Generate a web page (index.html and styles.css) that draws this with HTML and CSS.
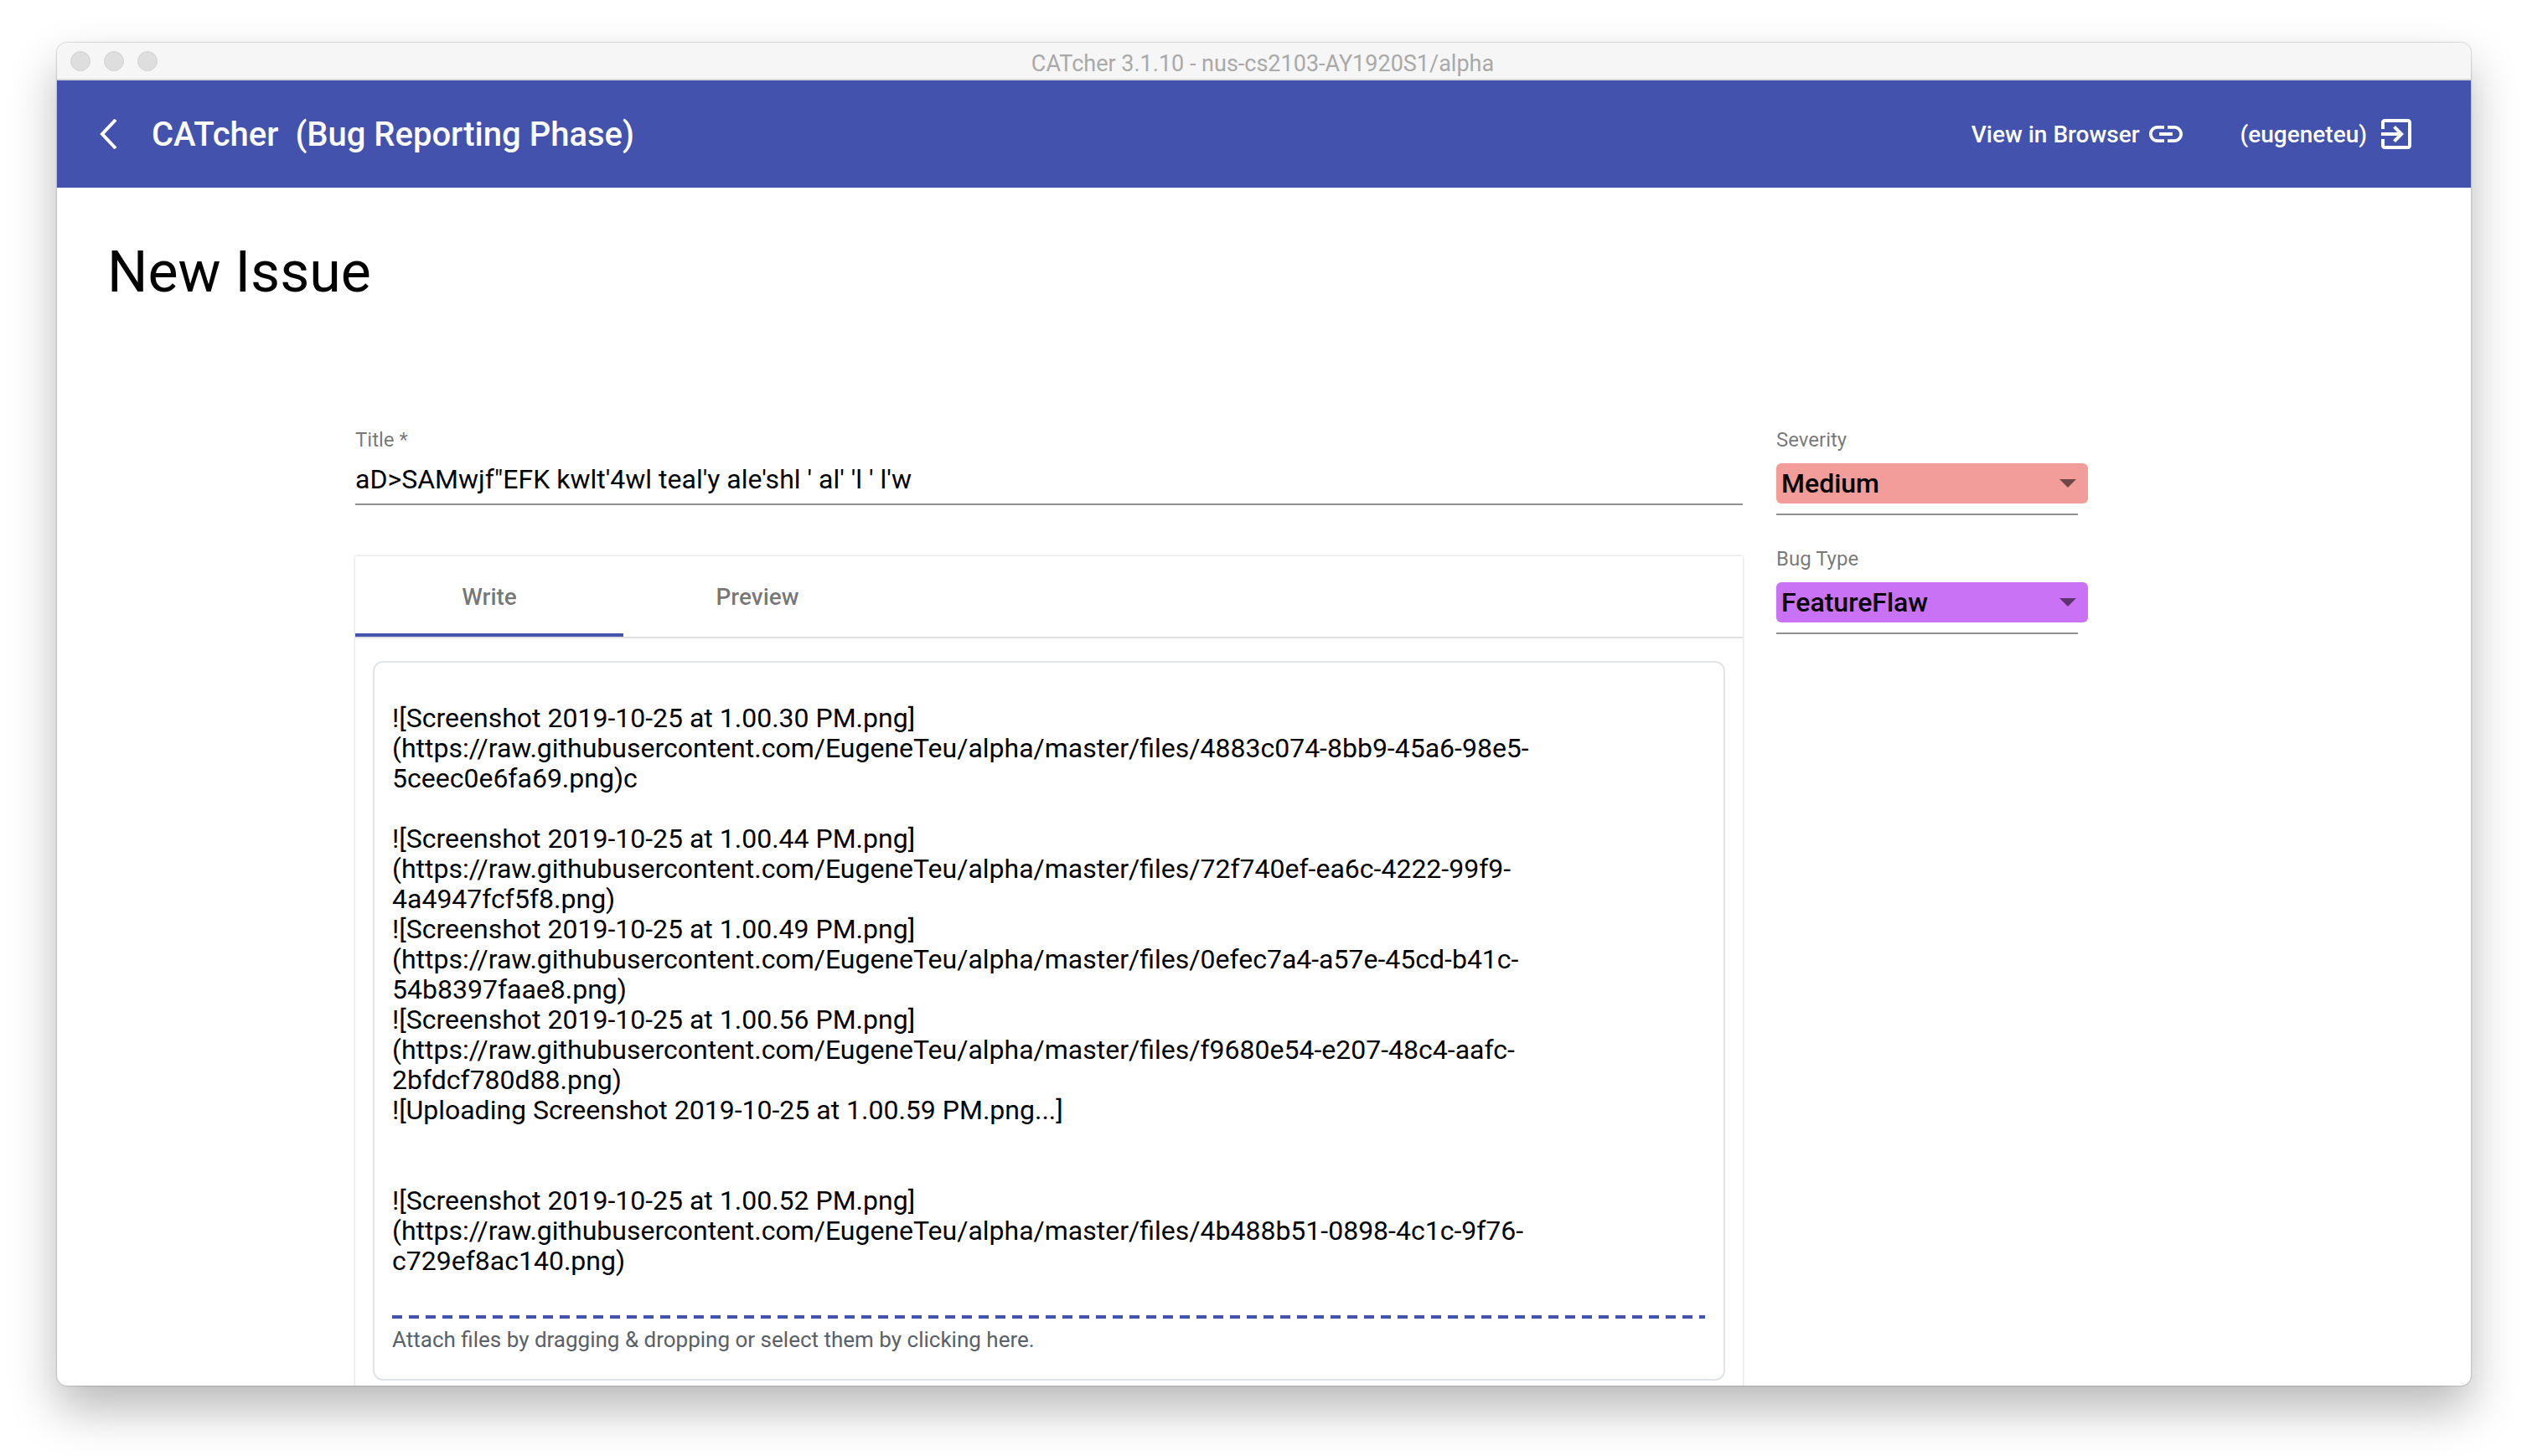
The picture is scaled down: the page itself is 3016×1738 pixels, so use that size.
FILE: index.html
```html
<!DOCTYPE html>
<html lang="en">
<head>
<meta charset="utf-8">
<title>CATcher</title>
<link rel="stylesheet" href="styles.css">
</head>
<body>
<div class="window">
  <div class="titlebar">
    <div class="lights"><span class="light"></span><span class="light"></span><span class="light"></span></div>
    <div class="wintitle">CATcher 3.1.10 - nus-cs2103-AY1920S1/alpha</div>
  </div>
  <header class="toolbar">
    <svg class="back" viewBox="0 0 21 36" width="21" height="36"><path d="M19 1 3 18l16 17" fill="none" stroke="#fff" stroke-width="4"/></svg>
    <div class="apptitle"><span>CATcher</span><span>(Bug Reporting Phase)</span></div>
    <div class="spacer"></div>
    <div class="tool browser">
      <span>View in Browser</span>
      <svg viewBox="0 0 24 24" width="48" height="48"><path fill="#fff" d="M3.9 12c0-1.71 1.39-3.1 3.1-3.1h4V7H7c-2.76 0-5 2.24-5 5s2.24 5 5 5h4v-1.9H7c-1.71 0-3.1-1.39-3.1-3.1zM8 13h8v-2H8v2zm9-6h-4v1.9h4c1.71 0 3.1 1.39 3.1 3.1s-1.39 3.1-3.1 3.1h-4V17h4c2.76 0 5-2.24 5-5s-2.24-5-5-5z"/></svg>
    </div>
    <div class="tool user">
      <span>(eugeneteu)</span>
      <svg viewBox="0 0 24 24" width="48" height="48"><path fill="#fff" d="M10.09 15.59L11.5 17l5-5-5-5-1.41 1.41L12.67 11H3v2h9.67l-2.58 2.59zM19 3H5c-1.11 0-2 .9-2 2v4h2V5h14v14H5v-4H3v4c0 1.1.89 2 2 2h14c1.1 0 2-.9 2-2V5c0-1.1-.9-2-2-2z"/></svg>
    </div>
  </header>
  <main class="content">
    <h1 class="heading">New Issue</h1>
    <div class="form">
      <div class="left">
        <div class="field">
          <label class="label">Title *</label>
          <div class="titlevalue">aD&gt;SAMwjf"EFK kwlt'4wl teal'y ale'shl ' al' 'l ' l'w</div>
        </div>
        <section class="card">
          <div class="tabs">
            <div class="tab active">Write</div>
            <div class="tab">Preview</div>
          </div>
          <div class="editor">
            <div class="text">![Screenshot 2019-10-25 at 1.00.30 PM.png]
(https://raw.githubusercontent.com/EugeneTeu/alpha/master/files/4883c074-8bb9-45a6-98e5-
5ceec0e6fa69.png)c

![Screenshot 2019-10-25 at 1.00.44 PM.png]
(https://raw.githubusercontent.com/EugeneTeu/alpha/master/files/72f740ef-ea6c-4222-99f9-
4a4947fcf5f8.png)
![Screenshot 2019-10-25 at 1.00.49 PM.png]
(https://raw.githubusercontent.com/EugeneTeu/alpha/master/files/0efec7a4-a57e-45cd-b41c-
54b8397faae8.png)
![Screenshot 2019-10-25 at 1.00.56 PM.png]
(https://raw.githubusercontent.com/EugeneTeu/alpha/master/files/f9680e54-e207-48c4-aafc-
2bfdcf780d88.png)
![Uploading Screenshot 2019-10-25 at 1.00.59 PM.png...]


![Screenshot 2019-10-25 at 1.00.52 PM.png]
(https://raw.githubusercontent.com/EugeneTeu/alpha/master/files/4b488b51-0898-4c1c-9f76-
c729ef8ac140.png)</div>
            <div class="dash"></div>
            <div class="attach">Attach files by dragging &amp; dropping or select them by clicking here.</div>
          </div>
        </section>
      </div>
      <aside class="right">
        <div class="selectfield">
          <label class="label">Severity</label>
          <div class="chip medium"><span>Medium</span><i class="arrow"></i></div>
          <div class="rule"></div>
        </div>
        <div class="selectfield">
          <label class="label">Bug Type</label>
          <div class="chip flaw"><span>FeatureFlaw</span><i class="arrow"></i></div>
          <div class="rule"></div>
        </div>
      </aside>
    </div>
  </main>
</div>
</body>
</html>
```
FILE: styles.css
```css
* { box-sizing: border-box; }
html, body { margin: 0; height: 100%; }
body {
  width: 3016px;
  height: 1738px;
  overflow: hidden;
  background: #fff;
  padding: 51px 67px 0 68px;
  font-family: Roboto, "Liberation Sans", sans-serif;
}
.window {
  width: 2881px;
  height: 1603px;
  background: #fff;
  border-radius: 12px;
  overflow: hidden;
  box-shadow: 0 0 2px rgba(0,0,0,.45), 0 28px 56px rgba(0,0,0,.28);
}
.titlebar {
  height: 45px;
  background: #f6f6f6;
  border-bottom: 2px solid #d8d8d8;
  display: flex;
  align-items: center;
  padding-left: 16px;
  position: relative;
}
.lights { display: flex; gap: 16px; }
.light {
  width: 24px;
  height: 24px;
  border-radius: 50%;
  background: #dedede;
  border: 1px solid #d2d2d2;
}
.wintitle {
  position: absolute;
  left: 0; right: 3px; top: 10px;
  text-align: center;
  font-size: 27px;
  line-height: 30px;
  color: #a9a9a9;
}
.toolbar {
  height: 128px;
  background: #4252ad;
  color: #fff;
  display: flex;
  align-items: center;
  padding-left: 51px;
  padding-right: 65px;
}
.back { flex: none; }
.apptitle {
  margin-left: 41px;
  font-size: 40px;
  font-weight: 500;
  display: flex;
  gap: 20px;
}
.spacer { flex: 1; }
.tool {
  display: flex;
  align-items: center;
  font-size: 28px;
  font-weight: 500;
}
.browser { gap: 7px; }
.user { margin-left: 65px; gap: 11px; }
.content { padding: 0 0 0 60px; }
.heading {
  margin: 0;
  padding-top: 61px;
  font-size: 68px;
  line-height: 80px;
  font-weight: 400;
  color: #000;
}
.form {
  display: flex;
  margin-left: 296px;
  margin-top: 146px;
  gap: 40px;
}
.left { width: 1656px; flex: none; }
.right { width: 372px; flex: none; }
.label {
  display: block;
  font-size: 24px;
  line-height: 28px;
  color: rgba(0,0,0,.54);
}
.titlevalue {
  margin-top: 14px;
  height: 50px;
  font-size: 32px;
  line-height: 38px;
  color: #000;
  border-bottom: 2px solid #8f8f8f;
}
.card {
  margin-top: 61px;
  box-shadow: 0 0 3px rgba(0,0,0,.22);
  height: 1000px;
}
.tabs {
  display: flex;
  height: 98px;
  border-bottom: 2px solid #e0e0e0;
}
.tab {
  width: 320px;
  height: 96px;
  display: flex;
  align-items: center;
  justify-content: center;
  font-size: 28px;
  font-weight: 500;
  color: rgba(0,0,0,.54);
}
.tab.active {
  border-bottom: 4px solid #4252ad;
  padding-top: 4px;
}
.editor {
  margin: 27px 21px 0;
  height: 859px;
  border: 2px solid #e1e4e8;
  border-radius: 12px;
  padding: 48px 22px 0 21px;
}
.text {
  white-space: pre;
  font-size: 32px;
  line-height: 36px;
  color: #000;
  height: 731px;
}
.dash {
  height: 4px;
  background: repeating-linear-gradient(90deg, #4252ad 0 12px, transparent 12px 20px);
}
.attach {
  margin-top: 10px;
  font-size: 26px;
  line-height: 30px;
  color: #586069;
}
.selectfield { height: 142px; }
.chip {
  margin-top: 14px;
  height: 48px;
  border-radius: 6px;
  display: flex;
  align-items: center;
  justify-content: space-between;
  padding: 0 14px 0 6px;
  font-size: 32px;
  font-weight: 500;
  color: #000;
}
.medium { background: #f29d9a; }
.flaw { background: #c972f5; }
.arrow {
  width: 0; height: 0;
  border-left: 10px solid transparent;
  border-right: 10px solid transparent;
  border-top: 10px solid rgba(0,0,0,.54);
}
.rule {
  margin-top: 12px;
  width: 360px;
  height: 2px;
  background: #8f8f8f;
}
```
